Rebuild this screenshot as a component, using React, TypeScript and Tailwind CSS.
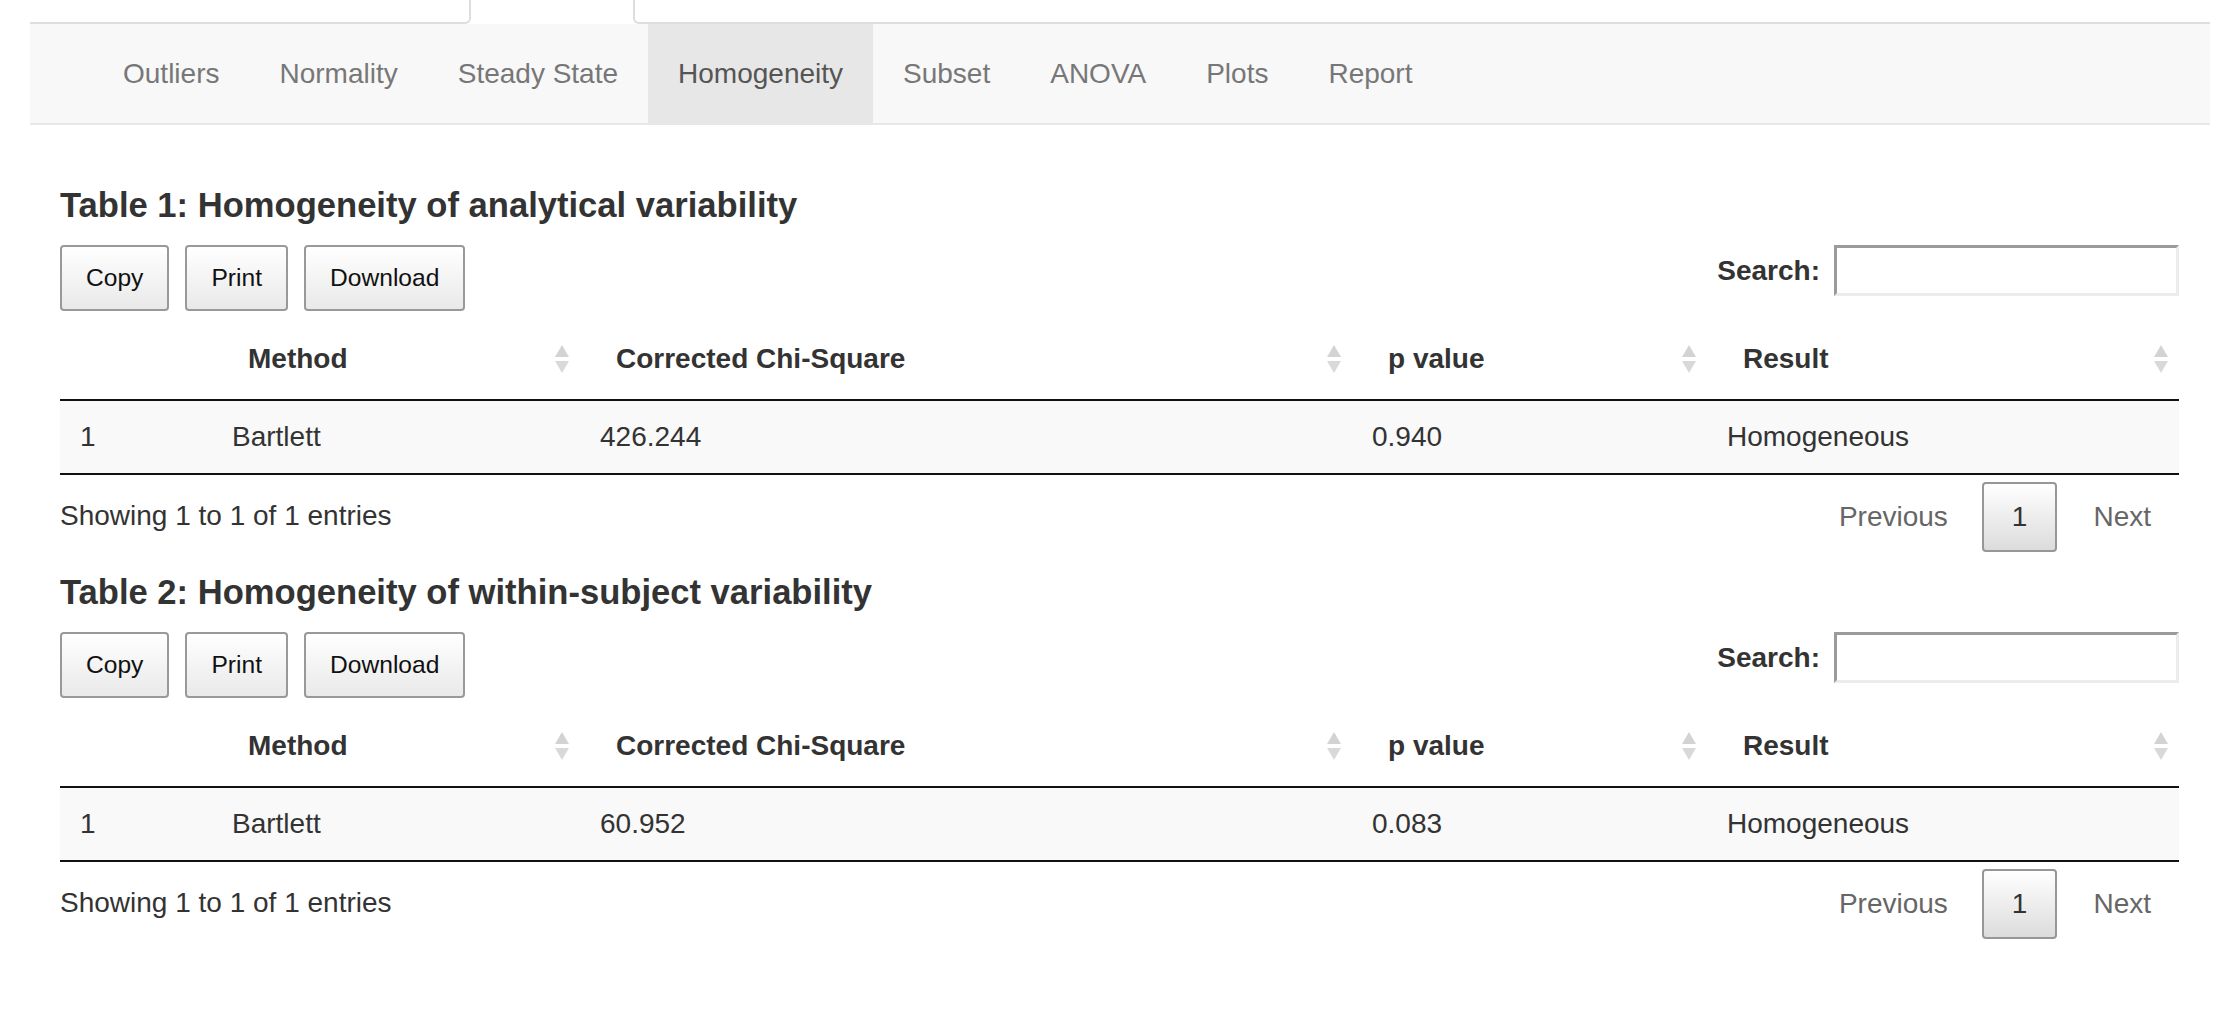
import React from "react";

type Row = { id: number; method: string; chi: string; p: string; result: string };

const TABS = ["Outliers", "Normality", "Steady State", "Homogeneity", "Subset", "ANOVA", "Plots", "Report"];

const TABLES: { title: string; rows: Row[] }[] = [
  {
    title: "Table 1: Homogeneity of analytical variability",
    rows: [{ id: 1, method: "Bartlett", chi: "426.244", p: "0.940", result: "Homogeneous" }],
  },
  {
    title: "Table 2: Homogeneity of within-subject variability",
    rows: [{ id: 1, method: "Bartlett", chi: "60.952", p: "0.083", result: "Homogeneous" }],
  },
];

const COLUMNS = [
  { label: "", width: "w-[152px]", sortable: false },
  { label: "Method", width: "w-[368px]", sortable: true },
  { label: "Corrected Chi-Square", width: "w-[772px]", sortable: true },
  { label: "p value", width: "w-[355px]", sortable: true },
  { label: "Result", width: "w-[472px]", sortable: true },
];

function SortIcon() {
  return (
    <svg
      className="absolute right-[10px] top-1/2 -translate-y-1/2"
      width="16"
      height="30"
      viewBox="0 0 16 30"
      aria-hidden="true"
    >
      <polygon points="1,13 8,1 15,13" fill="#d3d3d3" />
      <polygon points="1,17 15,17 8,29" fill="#d9d9d9" />
    </svg>
  );
}

function DtButton({ children }: { children: React.ReactNode }) {
  return (
    <button className="h-[66px] rounded-[4px] border-2 border-[#999] bg-gradient-to-b from-white to-[#e9e9e9] px-[24px] text-[24.6px] text-[#111]">
      {children}
    </button>
  );
}

function DataTable({ title, rows }: { title: string; rows: Row[] }) {
  return (
    <section>
      <h4 className="mb-[20px] text-[34.6px] font-bold leading-[40px] text-[#333]">{title}</h4>

      <div className="flex items-start justify-between">
        <div className="flex gap-[16px]">
          <DtButton>Copy</DtButton>
          <DtButton>Print</DtButton>
          <DtButton>Download</DtButton>
        </div>
        <label className="flex items-center gap-[14px] text-[28px] font-bold text-[#333]">
          Search:
          <input
            type="search"
            className="h-[51px] w-[345px] border-[3px] border-t-[#9b9b9b] border-l-[#9b9b9b] border-b-[#ececec] border-r-[#ececec] bg-white outline-none"
          />
        </label>
      </div>

      <table className="mt-[8px] w-full table-fixed border-separate border-spacing-0 text-[28px] text-[#333]">
        <thead>
          <tr>
            {COLUMNS.map((col, i) => (
              <th
                key={i}
                className={`relative ${col.width} h-[82px] border-b-2 border-[#111] px-[36px] text-left font-bold`}
              >
                {col.label}
                {col.sortable ? <SortIcon /> : null}
              </th>
            ))}
          </tr>
        </thead>
        <tbody>
          {rows.map((row) => (
            <tr key={row.id} className="bg-[#f9f9f9]">
              {[String(row.id), row.method, row.chi, row.p, row.result].map((cell, i) => (
                <td key={i} className="h-[74px] border-b-2 border-[#111] px-[20px]">
                  {cell}
                </td>
              ))}
            </tr>
          ))}
        </tbody>
      </table>

      <div className="flex items-start justify-between pt-[7px] text-[28px]">
        <div className="pt-[14px] leading-[40px] text-[#333]">Showing 1 to 1 of 1 entries</div>
        <div className="flex gap-[4px] leading-[40px]">
          <span className="px-[30px] py-[15px] text-[#666]">Previous</span>
          <span className="rounded-[4px] border-2 border-[#979797] bg-gradient-to-b from-white to-[#dcdcdc] px-[28px] py-[13px] text-[#333]">
            1
          </span>
          <span className="py-[15px] pl-[32px] pr-[28px] text-[#666]">Next</span>
        </div>
      </div>
    </section>
  );
}

export default function App() {
  return (
    <div className="min-h-[1020px] w-[2236px] bg-white font-['Liberation_Sans',Arial,sans-serif]">
      {/* bottom edge of the outer tabset */}
      <div className="flex h-[24px] pl-[30px] pr-[26px]">
        <div className="w-[441px] rounded-br-[6px] border-b-2 border-r-2 border-[#ddd]" />
        <div className="w-[162px]" />
        <div className="flex-1 rounded-bl-[6px] border-b-2 border-l-2 border-[#ddd]" />
      </div>

      <nav className="ml-[30px] mr-[26px] flex h-[101px] border-b-2 border-[#e7e7e7] bg-[#f8f8f8] pl-[63px]">
        {TABS.map((tab) => (
          <a
            key={tab}
            className={`flex items-center px-[30px] text-[28px] ${
              tab === "Homogeneity" ? "bg-[#e7e7e7] text-[#555]" : "text-[#777]"
            }`}
          >
            {tab}
          </a>
        ))}
      </nav>

      <main className="flex flex-col gap-[20px] pl-[60px] pr-[57px] pt-[60px]">
        {TABLES.map((t) => (
          <DataTable key={t.title} title={t.title} rows={t.rows} />
        ))}
      </main>
    </div>
  );
}
